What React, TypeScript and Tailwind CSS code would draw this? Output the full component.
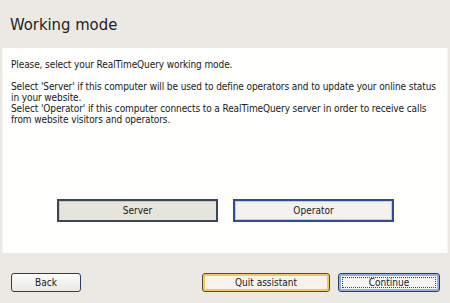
import React, { useState } from 'react';

type Mode = 'server' | 'operator';

const font = { fontFamily: '"DejaVu Sans Condensed", "Liberation Sans", sans-serif' };

const App: React.FC = () => {
  const [mode, setMode] = useState<Mode>('server');

  return (
    <div
      className="flex h-[303px] w-[450px] flex-col bg-[#ece9e4] text-[#1a1a1a]"
      style={font}
    >
      {/* titre */}
      <header className="flex h-[48px] items-center pl-[10px] pt-[2px]">
        <h1 className="text-[16.5px] leading-none text-[#222]">Working mode</h1>
      </header>

      <main className="mx-[2px] flex h-[205px] flex-col border-l border-r border-[#f6f5f2] bg-[#fefefc] px-[8px] pt-[11px] pb-[31px]">
        <div className="whitespace-nowrap text-[10px] leading-[11px] tracking-[-0.1px]">
          <p>Please, select your RealTimeQuery working mode.</p>
          <p className="mt-[11px]">
            Select 'Server' if this computer will be used to define operators and to update your online status
            <br />
            in your website.
          </p>
          <p>
            Select 'Operator' if this computer connects to a RealTimeQuery server in order to receive calls
            <br />
            from website visitors and operators.
          </p>
        </div>

        <div className="flex-1" />

        <div className="flex gap-[15px] pl-[46px]">
          <button
            onClick={() => setMode('server')}
            className={`h-[23px] w-[161px] border-2 text-[10px] ${
              mode === 'server'
                ? 'border-[#3c4856] bg-[#e6e4dd] shadow-[inset_1px_1px_0_#c9c6bd]'
                : 'border-[#2c4c9c] bg-[#f3f2ee] shadow-[inset_0_0_0_1px_#b8cdf0]'
            }`}
          >
            Server
          </button>
          <button
            onClick={() => setMode('operator')}
            className={`h-[23px] w-[161px] border-2 text-[10px] ${
              mode === 'operator'
                ? 'border-[#3c4856] bg-[#e6e4dd] shadow-[inset_1px_1px_0_#c9c6bd]'
                : 'border-[#2c4c9c] bg-[#f3f2ee] shadow-[inset_0_0_0_1px_#b8cdf0]'
            }`}
          >
            Operator
          </button>
        </div>
      </main>

      <footer className="flex items-start pt-[20px] pl-[11px]">
        <button className="h-[19px] w-[70px] rounded-[3px] border border-[#2b3d5e] bg-gradient-to-b from-[#fcfcfb] to-[#e9e8e2] text-[10px]">
          Back
        </button>
        <div className="flex-1" />
        <button className="h-[19px] w-[128px] rounded-[3px] border border-[#5d4a20] bg-[#f5f3ec] text-[10px] shadow-[inset_0_0_0_2px_#f6c75d]">
          Quit assistant
        </button>
        <button className="ml-[8px] mr-[10px] h-[19px] w-[102px] rounded-[3px] border border-[#2b3d5e] bg-[#f7f6f2] p-[3px] text-[10px] shadow-[inset_0_0_0_2px_#8fb0e8]">
          <span className="flex h-full w-full items-center justify-center border border-dotted border-[#444]">
            Continue
          </span>
        </button>
      </footer>
    </div>
  );
};

export default App;
